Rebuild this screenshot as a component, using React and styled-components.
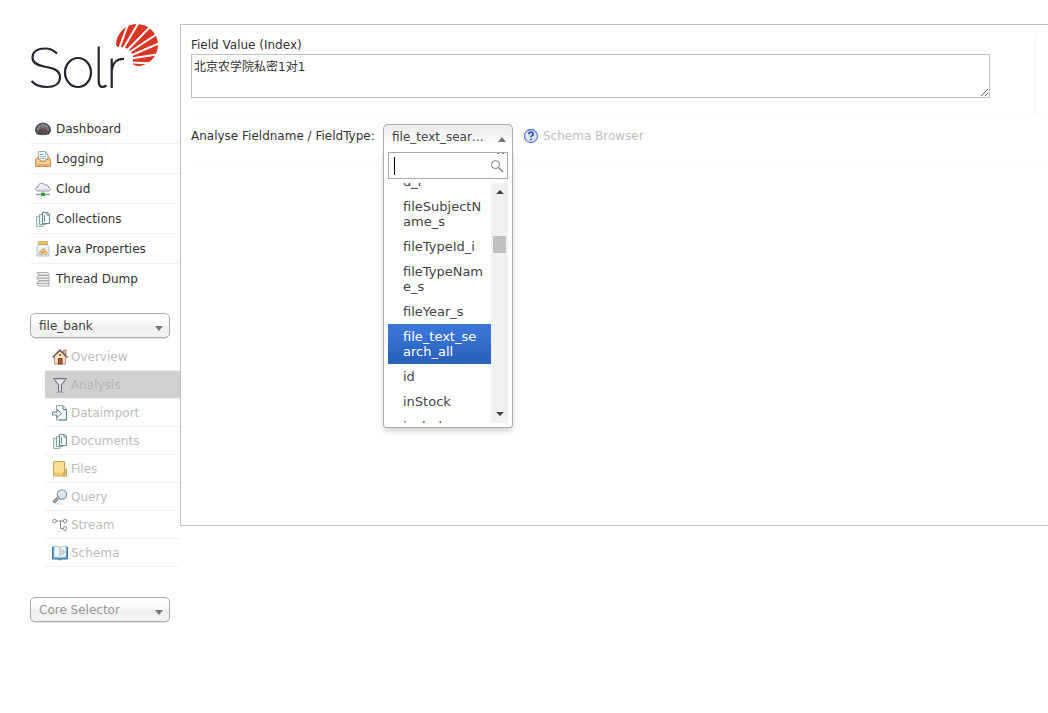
import React, { useLayoutEffect, useRef } from "react";
import styled, { createGlobalStyle, css } from "styled-components";

const Global = createGlobalStyle`
  *, *::before, *::after { box-sizing: border-box; }
  body {
    margin: 0;
    background: #fff;
    color: #333;
    font: 12px/16px "DejaVu Sans", Verdana, "Noto Sans CJK SC", sans-serif;
  }
  button, input, select, textarea { font: inherit; color: inherit; margin: 0; }
  ul { list-style: none; margin: 0; padding: 0; }
  a { color: inherit; text-decoration: none; }
`;

const Page = styled.div`
  display: flex;
  align-items: flex-start;
  padding: 24px 0 24px 30px;
`;

const Sidebar = styled.aside`
  flex: 0 0 150px;
`;

const LogoLink = styled.a`
  display: block;
  height: 90px;
  svg { display: block; }
`;

const MenuItem = styled.li`
  & + & { border-top: 1px solid #f0f0f0; }
`;

const MenuLink = styled.a`
  display: flex;
  align-items: center;
  gap: 5px;
  height: 29px;
  padding-left: 5px;
  svg { flex: none; }
`;

const CoreMenu = styled.ul`
  margin: 5px 0 30px 15px;
`;

const CoreItem = styled.li`
  border-bottom: 1px solid #f0f0f0;
`;

const CoreLink = styled.a`
  display: flex;
  align-items: center;
  gap: 3px;
  height: 27px;
  padding-left: 7px;
  color: ${(p) => (p.$active ? "#b4b4b4" : "#bbb")};
  background: ${(p) => (p.$active ? "#d0d0d0" : "transparent")};
  svg { flex: none; }
`;

const chosenFace = css`
  border: 1px solid #aaa;
  background: linear-gradient(#fff 20%, #f6f6f6 50%, #eee 52%, #f4f4f4 100%);
`;

const SelectWrap = styled.div`
  position: relative;
  width: 140px;
  margin-top: ${(p) => (p.$first ? 20 : 0)}px;
`;

const CoreSelect = styled.select`
  ${chosenFace}
  appearance: none;
  display: block;
  width: 100%;
  height: 25px;
  padding: 0 24px 0 8px;
  border-radius: 5px;
  box-shadow: 0 1px 1px rgba(0, 0, 0, 0.1);
  color: ${(p) => (p.$muted ? "#999" : "#444")};
`;

const Arrow = styled.span`
  width: 0;
  height: 0;
  border: 4px solid transparent;
  border-top: ${(p) => (p.$up ? "0" : "5px solid #777")};
  border-bottom: ${(p) => (p.$up ? "5px solid #777" : "0")};
`;

const SelectArrow = styled(Arrow)`
  position: absolute;
  right: 7px;
  top: 13px;
  pointer-events: none;
`;

const Content = styled.main`
  flex: 1;
  min-width: 0;
  min-height: 502px;
  border: 1px solid #c0c0c0;
  border-right: 0;
  padding: 10px 0 10px 10px;
`;

const ValueRow = styled.div`
  display: flex;
  border-bottom: 1px solid #f8f8f8;
`;

const ValueField = styled.div`
  flex: 1;
  height: 78px;
  padding-right: 45px;
  border-right: 1px solid #f0f0f0;
`;

const RowEnd = styled.div`
  flex: 0 0 12px;
`;

const FieldLabel = styled.label`
  display: block;
  padding: 2px 0 1px;
`;

const ValueText = styled.textarea`
  display: block;
  width: 100%;
  height: 44px;
  padding: 4px 2px;
  border: 1px solid #c0c0c0;
  outline: 0;
  resize: vertical;
`;

const AnalyseRow = styled.div`
  display: flex;
  align-items: flex-start;
  height: 51px;
  padding-top: 10px;
  border-bottom: 1px solid #f8f8f8;
`;

const AnalyseLabel = styled.label`
  width: 192px;
  padding-top: 4px;
  white-space: nowrap;
`;

const Chosen = styled.div`
  position: relative;
  width: 130px;
`;

const ChosenButton = styled.button`
  display: flex;
  align-items: center;
  justify-content: space-between;
  width: 100%;
  height: 25px;
  padding: 0 6px 0 8px;
  border: 1px solid #aaa;
  border-bottom: 0;
  border-radius: 5px 5px 0 0;
  background: linear-gradient(#eee 20%, #fff 80%);
  color: #444;
  text-align: left;
  ${Arrow} { margin-top: 4px; }
`;

const ChosenText = styled.span`
  width: 94px;
  overflow: hidden;
  white-space: nowrap;
  text-overflow: ellipsis;
`;

const Drop = styled.div`
  position: absolute;
  z-index: 2;
  top: 25px;
  left: 0;
  width: 100%;
  padding: 3px 4px 4px;
  border: 1px solid #aaa;
  border-top: 0;
  border-radius: 0 0 4px 4px;
  background: #fff;
  box-shadow: 0 4px 5px rgba(0, 0, 0, 0.15);
`;

const SearchBox = styled.div`
  display: flex;
  align-items: center;
  height: 27px;
  padding: 0 3px 0 5px;
  border: 1px solid #aaa;
`;

const SearchInput = styled.input`
  flex: 1;
  min-width: 0;
  height: 18px;
  padding: 0;
  border: 0;
  border-left: 1px solid #000;
  outline: 0;
  background: transparent;
`;

const Results = styled.div`
  display: flex;
  height: 240px;
  margin-top: 4px;
`;

const OptionList = styled.ul`
  flex: 1;
  min-width: 0;
  overflow: hidden;
`;

const Option = styled.li`
  padding: 5px 8px 5px 15px;
  line-height: 15px;
  font-size: 13px;
  color: ${(p) => (p.$selected ? "#fff" : "#444")};
  background: ${(p) => (p.$selected ? "linear-gradient(#3875d7 20%, #2a62bc 90%)" : "none")};
  word-break: break-all;
`;

const ScrollTrack = styled.div`
  display: flex;
  flex-direction: column;
  align-items: center;
  width: 17px;
  padding: 7px 2px;
  background: #f1f1f1;
`;

const TrackArrow = styled.span`
  border: 4px solid transparent;
  border-top: ${(p) => (p.$up ? "0" : "4px solid #444")};
  border-bottom: ${(p) => (p.$up ? "4px solid #444" : "0")};
`;

const Thumb = styled.span`
  width: 13px;
  height: 17px;
  margin: 42px 0 auto;
  background: #c1c1c1;
`;

const SchemaLink = styled.a`
  display: flex;
  align-items: center;
  gap: 4px;
  margin-left: 10px;
  padding-top: 4px;
  color: #c0c0c0;
`;

function Logo() {
  return (
    <svg width="130" height="68" viewBox="0 0 130 68" role="img" aria-label="Solr">
      <path
        d="M86 21A21 21 0 1 1 107 42C105 41.500 104 41 103 40V31L100 27L96 24L92 23H87.500Z"
        fill="#d93624"
      />
      <path
        d="M89 25L98.500 -1M93 25L109 -2M96.500 27L120 3M99 28.500L127 10M101 31.500L130 19M101 34.500L130 30M101 38.500L123 39.500"
        stroke="#fff"
        strokeWidth="2"
      />
      <g fill="none" stroke="#27222e" strokeWidth="2.200">
        <path d="M27 29.500C23 25.500 19 24.500 15 24.500C8 24.500 2.500 27.500 2.500 33.500C2.500 39 7 41 14 42.500C23 44 30 46 30 53C30 60 24 63 17 63C10 63 5 61 1.500 57" />
        <ellipse cx="48" cy="48.500" rx="13" ry="14.500" />
        <path d="M68.700 22.500V57C68.700 62.500 71.500 64.500 76.500 61.500" />
        <path d="M81.700 64V34.500M81.700 47C82.500 39 87 34.500 94 35" />
      </g>
    </svg>
  );
}

function Icon({ name }) {
  const art = {
    dashboard: (
      <>
        <path d="M.5 10C0 5 4 2 8 2S16 5 15.500 10L14 13Q8 14.500 2 13Z" fill="#4d4e54" stroke="#36373c" strokeWidth=".7" />
        <path d="M1.500 9C2 5 5 3 8 3S14 5 14.500 9Q8 6 1.500 9Z" fill="#74757b" />
        <path d="M2.500 9H4M4 5l1 1M8 3.500V5M12 5l-1 1M13.500 9H12" stroke="#bbb" strokeWidth=".8" />
        <path d="M5 5.500L11 12" stroke="#d8212b" />
      </>
    ),
    logging: (
      <>
        <path d="M3.500 .5H10.500L13 3V10H3.500Z" fill="#f1f8f7" stroke="#94b5b4" />
        <path d="M10.500 1V3.500H13" stroke="#94b5b4" />
        <path d="M5 3.500H9M5 5.500H11M5 7.500H11" stroke="#9fbdbb" />
        <path d="M.5 8L3 6V8.500H5L6 10.500H10L11 8.500H13V6L15.500 8V15.500H.5Z" fill="#f3cc98" stroke="#cc8f54" />
        <path d="M2 14H14" stroke="#e6ac6c" strokeWidth="2" />
      </>
    ),
    cloud: (
      <>
        <path d="M3 10C-.5 9-.3 6 3 6C3 2 8 1 10 4C13 3 14 6 13.500 6.500C16 7 16 10 13 10Z" fill="#eeeef6" stroke="#9294a8" />
        <path d="M3 9H13" stroke="#c6c7d9" />
        <path d="M1 13.500H15M8 10.500V13" stroke="#9a9da0" strokeWidth="1.500" />
        <rect x="6" y="12" width="4" height="3" fill="#23a83c" />
      </>
    ),
    docs: (
      <>
        <path d="M1.500 5.500H8V15.500H1.500Z" fill="#e6f1f1" stroke="#9ab3b3" />
        <path d="M4.500 3.500H11V13.500H4.500Z" fill="#e6f1f1" stroke="#83a3a4" />
        <path d="M7.500 1.500H12.500L14.500 3.500V12.500H7.500Z" fill="#f3f9f9" stroke="#67898b" />
        <path d="M12 1.500V4H14.500M9.500 4V10.500" stroke="#67898b" />
      </>
    ),
    jar: (
      <>
        <path d="M4 3.500C2 5 2 6 2 8V15H14V8C14 6 14 5 12 3.500Z" fill="#e9f2f9" stroke="#a4c0d6" />
        <path d="M3.500 .5H12.500V3.500H3.500Z" fill="#efc45f" stroke="#c9963b" strokeWidth=".7" />
        <path d="M4 5.500H9" stroke="#fff" strokeWidth="1.500" />
        <g fill="#edc982" stroke="#c99743" strokeWidth=".7">
          <circle cx="8.500" cy="9.500" r="1.800" />
          <circle cx="6" cy="12" r="1.800" />
          <circle cx="10.500" cy="12" r="1.800" />
        </g>
      </>
    ),
    threads: (
      <g fill="#f1f1f1" stroke="#aaa">
        <path d="M2 12.500H12.500L14.500 15H3.500Z" />
        <path d="M3.500 10H13L14.500 12.500H2Z" />
        <path d="M2 7H12.500L14.500 9.500H3.500Z" />
        <path d="M3.500 4.500H13L14.500 7H2Z" />
        <path d="M2 1.500H12.500L14.500 4H3.500Z" />
      </g>
    ),
    home: (
      <>
        <path d="M2.500 7L8 2L13.500 7V15H2.500Z" fill="#f4dfc3" stroke="#b8937a" />
        <path d="M11.500 1H14V6H11.500Z" fill="#d8b49a" stroke="#795543" strokeWidth=".6" />
        <path d="M.5 8.500L8 1L15.500 8.500" stroke="#6f6059" strokeWidth="1.500" />
        <path d="M6.500 9.500H10V15H6.500Z" fill="#b45c24" stroke="#743b22" />
        <path d="M7 5H9V7H7Z" fill="#8e6250" />
      </>
    ),
    funnel: (
      <>
        <path d="M1.500 1.500H14.500L9.500 8V15H6.500V8Z" fill="#c5c6cc" stroke="#6e7078" />
        <path d="M4 3H12L8.500 7.500H7.500Z" fill="#e9e9ee" />
        <path d="M8 8V14" stroke="#f2f2f5" />
        <path d="M4 15.500H12" stroke="#aaa" />
      </>
    ),
    importDoc: (
      <>
        <path d="M4.500 .5H11L14.500 4V15H4.500Z" fill="#eff7f7" stroke="#8aa9a9" />
        <path d="M11 1V4.500H14.500M14.500 5V15H7" stroke="#5e8284" />
        <path d="M.5 7H5V4.500L9.500 8.500L5 12.500V10H.5Z" fill="#eef3f3" stroke="#788b8d" />
      </>
    ),
    folder: (
      <>
        <path d="M1.500 .5H12.500V15H1.500Z" fill="#f8dc94" stroke="#cfa14c" />
        <path d="M2 13H12" stroke="#efc66c" strokeWidth="3" />
        <path d="M12.500 9.500L14.500 7.500V15H11.500Z" fill="#f0c566" stroke="#c99943" />
        <path d="M12.500 9V13" stroke="#7db7d1" />
      </>
    ),
    query: (
      <>
        <path d="M1.500 13.500L6 9" stroke="#777" strokeWidth="3" />
        <path d="M1.500 13.500L6 9" stroke="#ccc" />
        <path d="M3 15H12" stroke="#e2e2e2" />
        <circle cx="10" cy="5.500" r="4.700" fill="#d4e7f7" stroke="#9299a6" strokeWidth="1.300" />
        <path d="M7 5C8 2 11 2 12 3" stroke="#fff" />
      </>
    ),
    stream: (
      <g fill="#fff" stroke="#8b8b8b">
        <path d="M4 4H12M8.500 4V11.500H12" fill="none" />
        <circle cx="2.500" cy="4" r="1.800" />
        <circle cx="13" cy="4" r="1.800" />
        <circle cx="13" cy="11.500" r="1.800" />
        <path d="M6 14.500H15" stroke="#e4e4e4" />
      </g>
    ),
    book: (
      <>
        <path d="M.5 2H6L8 3L10 2H15.500V14H10L8 15L6 14H.5Z" fill="#4f93c1" stroke="#3d779f" />
        <path d="M2 1.500C5 1 7 1.500 8 3V13C6 12 4 12 2 12.500ZM8 3C10 1 12 1 14 1.500V12.500C12 12 10 12 8 13Z" fill="#eff6f8" stroke="#a4bfca" strokeWidth=".7" />
        <path d="M9.500 5H12M9.500 7H13M9.500 9H12" stroke="#8daeb8" />
      </>
    ),
  };
  return (
    <svg width="16" height="16" viewBox="0 0 16 16" fill="none" aria-hidden="true">
      {art[name]}
    </svg>
  );
}

const menu = [
  ["Dashboard", "dashboard"],
  ["Logging", "logging"],
  ["Cloud", "cloud"],
  ["Collections", "docs"],
  ["Java Properties", "jar"],
  ["Thread Dump", "threads"],
];

const coreMenu = [
  ["Overview", "home"],
  ["Analysis", "funnel"],
  ["Dataimport", "importDoc"],
  ["Documents", "docs"],
  ["Files", "folder"],
  ["Query", "query"],
  ["Stream", "stream"],
  ["Schema", "book"],
];

const fields = [
  "fileSubjectId_i",
  "fileSubjectName_s",
  "fileTypeId_i",
  "fileTypeName_s",
  "fileYear_s",
  "file_text_search_all",
  "id",
  "inStock",
  "includes",
];

function FieldPicker() {
  const list = useRef(null);
  useLayoutEffect(() => {
    list.current.scrollTop = 29;
  }, []);
  return (
    <Chosen>
      <ChosenButton id="field" type="button" aria-haspopup="listbox" aria-expanded="true">
        <ChosenText>file_text_search_all</ChosenText>
        <Arrow $up />
      </ChosenButton>
      <Drop>
        <SearchBox>
          <SearchInput type="text" aria-label="Search fields" />
          <svg width="14" height="25" viewBox="0 0 14 25" fill="none" stroke="#777" aria-hidden="true">
            <path d="M7 .5H9M12 .5H14" />
            <circle cx="5.500" cy="11.500" r="4" />
            <path d="M8.500 14.500L13 19" strokeWidth="1.300" />
          </svg>
        </SearchBox>
        <Results>
          <OptionList ref={list} role="listbox" aria-label="Fields">
            {fields.map((f) => (
              <Option
                key={f}
                role="option"
                aria-selected={f === "file_text_search_all"}
                $selected={f === "file_text_search_all"}
              >
                {f}
              </Option>
            ))}
          </OptionList>
          <ScrollTrack aria-hidden="true">
            <TrackArrow $up />
            <Thumb />
            <TrackArrow />
          </ScrollTrack>
        </Results>
      </Drop>
    </Chosen>
  );
}

export default function App() {
  return (
    <>
      <Global />
      <Page>
        <Sidebar>
          <LogoLink href="#/"><Logo /></LogoLink>
          <nav>
            <ul>
              {menu.map(([label, icon]) => (
                <MenuItem key={label}>
                  <MenuLink href="#/"><Icon name={icon} />{label}</MenuLink>
                </MenuItem>
              ))}
            </ul>
          </nav>
          <SelectWrap $first>
            <CoreSelect aria-label="Collection" defaultValue="file_bank">
              <option>file_bank</option>
            </CoreSelect>
            <SelectArrow />
          </SelectWrap>
          <CoreMenu>
            {coreMenu.map(([label, icon]) => (
              <CoreItem key={label}>
                <CoreLink href="#/" $active={label === "Analysis"}><Icon name={icon} />{label}</CoreLink>
              </CoreItem>
            ))}
          </CoreMenu>
          <SelectWrap>
            <CoreSelect aria-label="Core" $muted>
              <option>Core Selector</option>
            </CoreSelect>
            <SelectArrow />
          </SelectWrap>
        </Sidebar>
        <Content>
          <ValueRow>
            <ValueField>
              <FieldLabel htmlFor="value">Field Value (Index)</FieldLabel>
              <ValueText id="value" defaultValue="北京农学院私密1对1" />
            </ValueField>
            <RowEnd />
          </ValueRow>
          <AnalyseRow>
            <AnalyseLabel htmlFor="field">Analyse Fieldname / FieldType:</AnalyseLabel>
            <FieldPicker />
            <SchemaLink href="#/">
              <svg width="16" height="16" viewBox="0 0 16 16" aria-hidden="true">
                <circle cx="8" cy="8" r="6.500" fill="#dfe5f3" stroke="#6480da" strokeWidth="1.300" />
                <path d="M5.800 6.300C5.800 3.300 10.300 3.500 10.200 6.100C10.100 7.700 8 7.600 8 9.300M8 10.700V12.200" fill="none" stroke="#2d4fb5" strokeWidth="1.700" />
              </svg>
              Schema Browser
            </SchemaLink>
          </AnalyseRow>
        </Content>
      </Page>
    </>
  );
}
